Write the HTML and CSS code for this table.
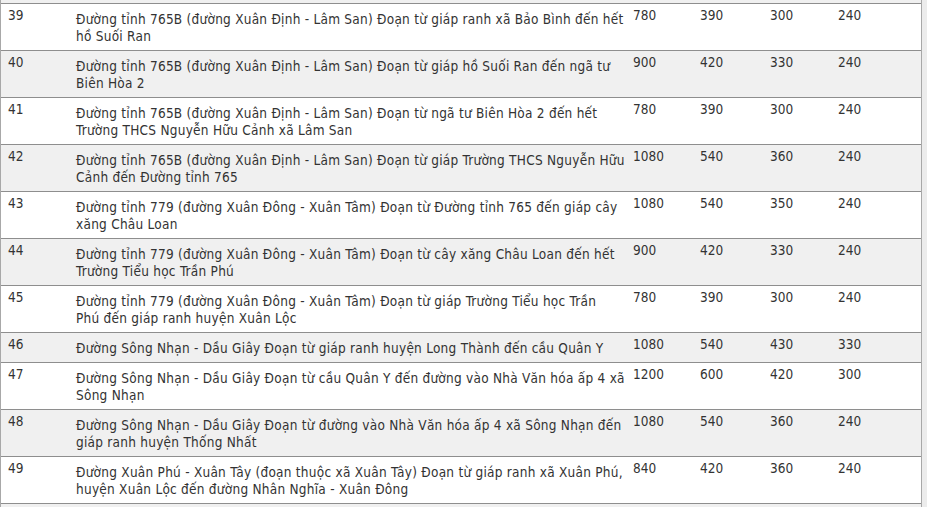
FILE: index.html
```html
<!DOCTYPE html>
<html lang="vi">
<head>
<meta charset="utf-8">
<title>Bảng giá đất</title>
<link rel="stylesheet" href="styles.css">
</head>
<body>
<div class="frame">
  <div class="prev-row"></div>
  <table class="price-table">
    <colgroup>
      <col class="c-no">
      <col class="c-desc">
      <col class="c-v1">
      <col class="c-v2">
      <col class="c-v3">
      <col class="c-v4">
    </colgroup>
    <tbody>
      <tr><td>39</td><td class="desc">Đường tỉnh 765B (đường Xuân Định - Lâm San) Đoạn từ giáp ranh xã Bảo Bình đến hết<br>hồ Suối Ran</td><td>780</td><td>390</td><td>300</td><td>240</td></tr>
      <tr><td>40</td><td class="desc">Đường tỉnh 765B (đường Xuân Định - Lâm San) Đoạn từ giáp hồ Suối Ran đến ngã tư<br>Biên Hòa 2</td><td>900</td><td>420</td><td>330</td><td>240</td></tr>
      <tr><td>41</td><td class="desc">Đường tỉnh 765B (đường Xuân Định - Lâm San) Đoạn từ ngã tư Biên Hòa 2 đến hết<br>Trường THCS Nguyễn Hữu Cảnh xã Lâm San</td><td>780</td><td>390</td><td>300</td><td>240</td></tr>
      <tr><td>42</td><td class="desc">Đường tỉnh 765B (đường Xuân Định - Lâm San) Đoạn từ giáp Trường THCS Nguyễn Hữu<br>Cảnh đến Đường tỉnh 765</td><td>1080</td><td>540</td><td>360</td><td>240</td></tr>
      <tr><td>43</td><td class="desc">Đường tỉnh 779 (đường Xuân Đông - Xuân Tâm) Đoạn từ Đường tỉnh 765 đến giáp cây<br>xăng Châu Loan</td><td>1080</td><td>540</td><td>350</td><td>240</td></tr>
      <tr><td>44</td><td class="desc">Đường tỉnh 779 (đường Xuân Đông - Xuân Tâm) Đoạn từ cây xăng Châu Loan đến hết<br>Trường Tiểu học Trần Phú</td><td>900</td><td>420</td><td>330</td><td>240</td></tr>
      <tr><td>45</td><td class="desc">Đường tỉnh 779 (đường Xuân Đông - Xuân Tâm) Đoạn từ giáp Trường Tiểu học Trần<br>Phú đến giáp ranh huyện Xuân Lộc</td><td>780</td><td>390</td><td>300</td><td>240</td></tr>
      <tr><td>46</td><td class="desc">Đường Sông Nhạn - Dầu Giây Đoạn từ giáp ranh huyện Long Thành đến cầu Quân Y</td><td>1080</td><td>540</td><td>430</td><td>330</td></tr>
      <tr><td>47</td><td class="desc">Đường Sông Nhạn - Dầu Giây Đoạn từ cầu Quân Y đến đường vào Nhà Văn hóa ấp 4 xã<br>Sông Nhạn</td><td>1200</td><td>600</td><td>420</td><td>300</td></tr>
      <tr><td>48</td><td class="desc">Đường Sông Nhạn - Dầu Giây Đoạn từ đường vào Nhà Văn hóa ấp 4 xã Sông Nhạn đến<br>giáp ranh huyện Thống Nhất</td><td>1080</td><td>540</td><td>360</td><td>240</td></tr>
      <tr><td>49</td><td class="desc">Đường Xuân Phú - Xuân Tây (đoạn thuộc xã Xuân Tây) Đoạn từ giáp ranh xã Xuân Phú,<br>huyện Xuân Lộc đến đường Nhân Nghĩa - Xuân Đông</td><td>840</td><td>420</td><td>360</td><td>240</td></tr>
      <tr class="next-row"><td></td><td></td><td></td><td></td><td></td><td></td></tr>
    </tbody>
  </table>
</div>
</body>
</html>
```

FILE: styles.css
```css
html, body {
  margin: 0;
  padding: 0;
  background: #ececec;
}

body {
  font-family: "DejaVu Sans Condensed", "DejaVu Sans", sans-serif;
  font-stretch: condensed;
  font-size: 13.5px;
  color: #333;
  height: 507px;
  overflow: hidden;
}

.frame {
  width: 920px;
  border-left: 1px solid #a8a8a8;
  border-right: 1px solid #a8a8a8;
  background: #fff;
}

.prev-row {
  height: 3px;
  background: #f0f0f0;
  border-bottom: 1px solid #8e8e8e;
}

.price-table {
  width: 920px;
  table-layout: fixed;
  border-collapse: collapse;
  border-spacing: 0;
}

.c-no { width: 70px; }
.c-desc { width: 557px; }
.c-v1 { width: 67px; }
.c-v2 { width: 70px; }
.c-v3 { width: 68px; }
.c-v4 { width: 88px; }

.price-table td {
  vertical-align: top;
  padding: 3px 0 0 5px;
  line-height: 17px;
  border-bottom: 1px solid #8e8e8e;
}

.price-table td:first-child {
  padding-left: 7px;
}

.price-table td.desc {
  padding-top: 7px;
  padding-bottom: 5px;
  white-space: nowrap;
  letter-spacing: 0.25px;
}

.price-table tr:nth-child(even) td {
  background: #f0f0f0;
}

.price-table tr.next-row td {
  border-bottom: 0;
  height: 20px;
}
```
